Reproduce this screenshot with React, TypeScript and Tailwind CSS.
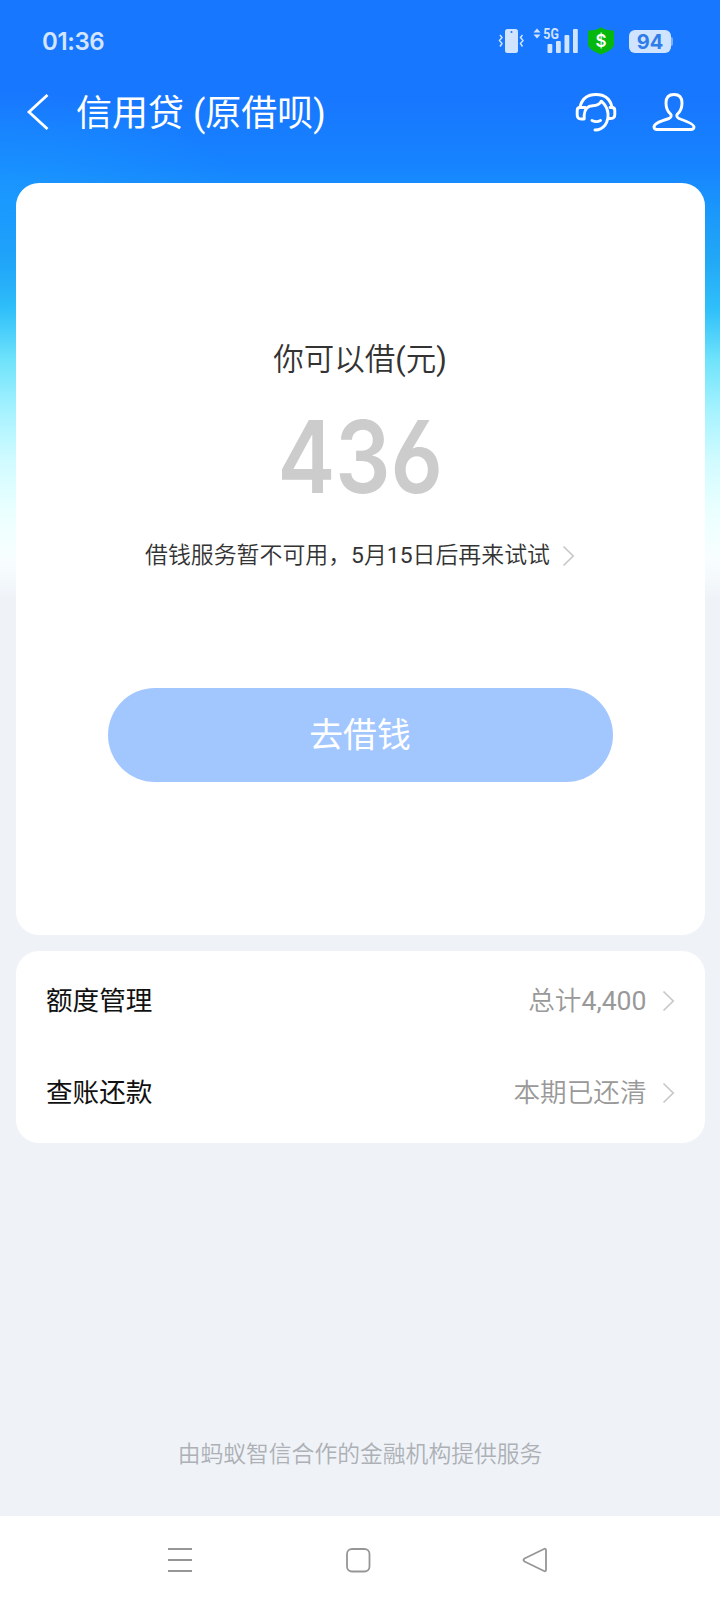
import React from "react";

function Chevron() {
  return (
    <svg width="14" height="24" viewBox="0 0 14 24" fill="none" stroke="#c8c8c8" strokeWidth="1.7">
      <path d="M1.5 2.500 L11.200 12 L1.5 21.500" />
    </svg>
  );
}

function StatusBar() {
  return (
    <div className="flex h-[82px] items-center pl-[42px] pr-[47px]">
      <span className="pt-px font-['Inter',sans-serif] text-[24px] font-semibold leading-none tracking-[-0.4px] text-[#d3e5ff]">01:36</span>
      <div className="ml-auto flex items-center">
        <svg width="118" height="28" viewBox="498 27 118 28" fill="#d1e4ff">
          <rect x="505" y="29" width="13" height="24" rx="2.5" />
          <circle cx="511.500" cy="32" r="1" fill="#1877ff" />
          <path d="M500 35l2 2.500-2.500 3 2.500 3-2 3M522.500 35l-2 2.500 2.500 3-2.500 3 2 3" fill="none" stroke="#d1e4ff" strokeWidth="1.500" />
          <path d="M533.500 32.500l3.500-4 3.500 4zM533.500 34.500l3.500 4 3.500-4z" />
          <text x="543.300" y="38.600" fontFamily="Roboto, sans-serif" fontSize="14" fontWeight="700" textLength="15.500" lengthAdjust="spacingAndGlyphs">5G</text>
          <rect x="547.500" y="44" width="4.800" height="9" rx="1" />
          <rect x="556" y="41" width="4.800" height="12" rx="1" />
          <rect x="564.500" y="35" width="4.800" height="18" rx="1" />
          <rect x="573" y="29" width="4.800" height="24" rx="1" />
          <path d="M601 27.200q5 3.300 12 3.300q1 0 1 1v13q0 5-13 10q-13-5-13-10v-13q0-1 1-1q7 0 12-3.300z" fill="#06b80e" />
          <text x="601" y="46.500" textAnchor="middle" fontFamily="Inter, sans-serif" fontSize="17" fontWeight="600" fill="#fff">$</text>
        </svg>
        <div className="ml-[13px] flex h-[23px] w-[42px] items-center justify-center rounded-[6px] bg-[#d1e4ff] pt-px font-['Inter',sans-serif] text-[20px] font-bold leading-none text-[#2f7de8]">94</div>
        <div className="h-[9px] w-[2px] rounded-r bg-[#78b0ff]" />
      </div>
    </div>
  );
}

function Header() {
  return (
    <header className="flex h-[60px] items-center pl-[26px] pr-[22px] text-white">
      <svg width="24" height="36" viewBox="26 94.500 24 36" fill="none" stroke="currentColor" strokeWidth="2.800">
        <path d="M47.500 95.500L29 112.500L47.500 129.500" />
      </svg>
      <h1 className="ml-[26px] whitespace-nowrap pt-[4px] text-[36px] font-normal leading-none">信用贷 (原借呗)</h1>
      <svg className="ml-auto" width="124" height="42" viewBox="574 91 124 42" fill="none" stroke="currentColor" strokeWidth="2.900" strokeLinecap="round" strokeLinejoin="round">
        <path d="M580 107C582 98.500 588 94.500 596 94.500S610 98.500 612 107" />
        <path d="M585 107.500h-5q-2.800 0-2.800 3v4.500q0 4 4 4h3v-4c.5-6 3-9 8.500-9.200c4 0 7-1.300 8.600-4.600c4 3.500 6.200 7.500 6.700 12.300c.5 9-4 16.500-13 16.500M610 107.500h2q2.800 0 2.800 3v4q0 4-4 4h-3M592 120.500q4.500 2.300 8.500 0" />
        <path d="M669 118.500q3.500-2 1.500-4.500q-4.500-4-4.500-11q0-8.500 8-8.500t8 8.500q0 7-4.500 11q-2 2.500 1.500 4.500q15 5.500 15 8.300q0 2.700-3 2.700h-34q-3 0-3-2.700q0-3.800 15-8.300z" />
      </svg>
    </header>
  );
}

function Row({ label, value, amount }: { label: string; value: string; amount?: string }) {
  return (
    <div className="flex h-[92px] items-center pl-[30.500px] pr-[29px] text-[26.600px]">
      <span className="text-[#111]">{label}</span>
      <span className="ml-auto mr-[15px] font-[350] text-[#999]">
        {value}
        {amount && <span className="font-normal">{amount}</span>}
      </span>
      <Chevron />
    </div>
  );
}

export default function App() {
  return (
    <div className="flex h-[1604px] w-[720px] flex-col bg-[#eff3f8] font-['Roboto','Noto_Sans_CJK_SC',sans-serif]">
      <div className="flex flex-1 flex-col bg-[radial-gradient(ellipse_240px_110px_at_0px_200px,#1b9cffb0_0%,#1b9cff00_100%),linear-gradient(180deg,#1877ff_0px,#1877ff_100px,#1683ff_165px,#1a97fb_210px,#22a8f6_260px,#30c0fa_310px,#6fe3fb_360px,#a5f2ff_410px,#d0fbff_460px,#eaffff_510px,#f8feff_560px,#eff3f8_600px)]">
        <StatusBar />
        <Header />
        <main className="flex flex-1 flex-col px-[15.500px] pt-[41px]">
          <section className="flex h-[752px] flex-col items-center rounded-[23px] bg-white">
            <p className="mt-[157px] text-[30.500px] font-[350] leading-[40px] text-[#333]">
              你可以借<span className="font-normal">(</span>元<span className="font-normal">)</span>
            </p>
            <div className="mt-[30px] flex h-[92px] scale-x-[0.86] items-center font-['Inter',sans-serif] text-[101px] font-semibold leading-none text-[#ccc] [font-feature-settings:'cv03']">436</div>
            <div className="mt-[37px] flex items-center gap-[12px] pl-px text-[22.900px] font-[350] leading-[34px] text-[#333]">
              <span>
                借钱服务暂不可用，<span className="font-normal">5</span>月<span className="font-normal">15</span>日后再来试试
              </span>
              <Chevron />
            </div>
            <button className="mt-[115px] flex h-[94px] w-[505px] items-center justify-center rounded-full bg-[#a2c7ff] pt-[3px] text-[33.800px] text-white">去借钱</button>
          </section>
          <section className="mt-4 flex h-[192px] flex-col rounded-[23px] bg-white pt-[4px]">
            <Row label="额度管理" value="总计" amount="4,400" />
            <Row label="查账还款" value="本期已还清" />
          </section>
          <p className="mb-[45px] mt-auto text-center text-[22.800px] font-[350] leading-[32px] text-[#adb0b5]">由蚂蚁智信合作的金融机构提供服务</p>
        </main>
      </div>
      <nav className="flex h-[88px] items-center justify-between bg-white pl-[167px] pr-[172px]">
        <svg width="26" height="26" viewBox="0 0 26 26" stroke="#969696" strokeWidth="1.800"><path d="M1 2h24M1 13h24M1 24h24" /></svg>
        <svg width="26" height="26" viewBox="0 0 26 26" fill="none" stroke="#969696" strokeWidth="1.800"><rect x="2" y="2" width="22.500" height="22.500" rx="5" /></svg>
        <svg width="26" height="26" viewBox="0 0 26 26" fill="none" stroke="#969696" strokeWidth="1.800" strokeLinejoin="round"><path d="M2.500 11.500L22 2q2-.8 2 1.200v19.600q0 2-2 1.200L2.500 14.500q-2-1.500 0-3z" /></svg>
      </nav>
    </div>
  );
}
